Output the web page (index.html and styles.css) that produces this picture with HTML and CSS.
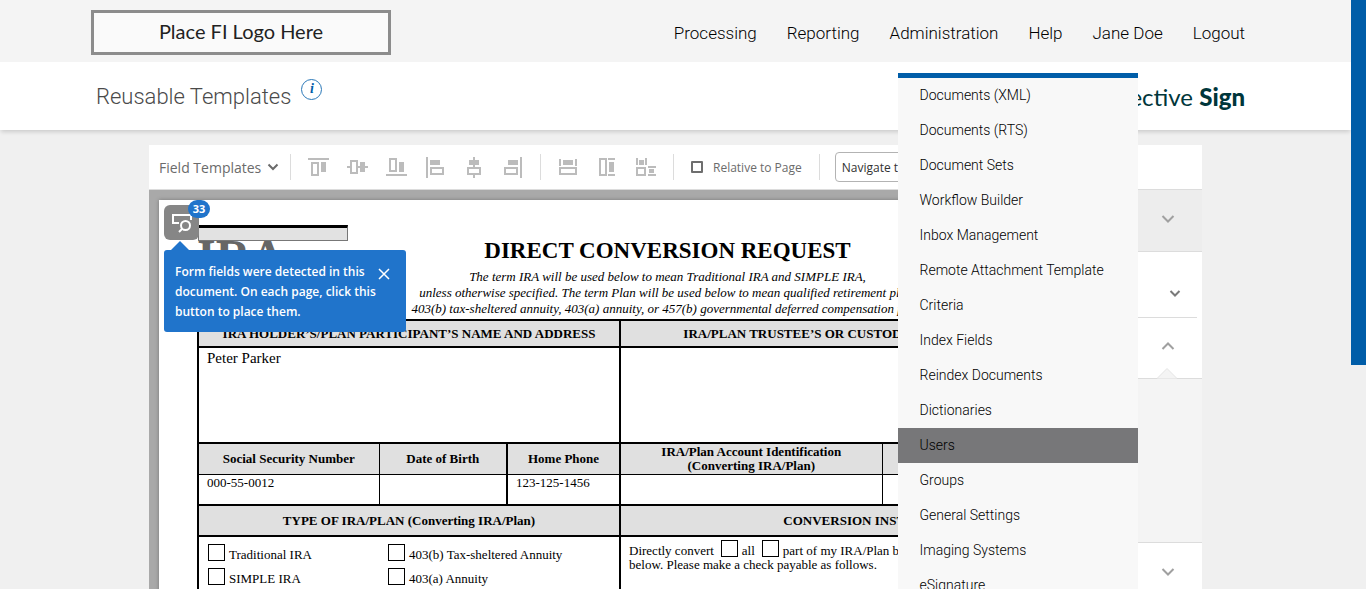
FILE: index.html
```html
<!DOCTYPE html>
<html lang="en">

<head>
    <meta charset="UTF-8">
    <meta name="viewport" content="width=device-width, initial-scale=1.0">
    <title>Reusable Templates</title>
    <link rel="stylesheet" href="styles.css">
</head>

<body>
    <div class="app">
        <header class="header">
            <div class="fi-logo">Place FI Logo Here</div>
            <nav class="nav">
                <a href="#">Processing</a>
                <a href="#">Reporting</a>
                <div class="nav-item">
                    <a href="#">Administration</a>
                    <div class="menu">
                        <a href="#">Documents (XML)</a>
                        <a href="#">Documents (RTS)</a>
                        <a href="#">Document Sets</a>
                        <a href="#">Workflow Builder</a>
                        <a href="#">Inbox Management</a>
                        <a href="#">Remote Attachment Template</a>
                        <a href="#">Criteria</a>
                        <a href="#">Index Fields</a>
                        <a href="#">Reindex Documents</a>
                        <a href="#">Dictionaries</a>
                        <a href="#" class="active">Users</a>
                        <a href="#">Groups</a>
                        <a href="#">General Settings</a>
                        <a href="#">Imaging Systems</a>
                        <a href="#">eSignature</a>
                    </div>
                </div>
                <a href="#">Help</a>
                <a href="#">Jane Doe</a>
                <a href="#">Logout</a>
            </nav>
        </header>

        <div class="title-bar">
            <h1>Reusable Templates</h1>
            <button class="info" aria-label="Information">i</button>
            <div class="brand">Effective <b>Sign</b></div>
        </div>

        <main class="editor">
            <div class="toolbar">
                <button class="templates">Field Templates
                    <svg width="12" height="8" viewBox="0 0 12 8"><path d="M1.500 1.500 6 6l4.500-4.500" /></svg>
                </button>
                <span class="separator"></span>
                <button class="tool" aria-label="Align top">
                    <svg width="21" height="22" viewBox="0 -1 21 22"><path d="M0 1h21v2H0zM13 5h5v10h-5z" /><rect x="4" y="6" width="6" height="12" /></svg>
                </button>
                <button class="tool" aria-label="Align middle">
                    <svg width="21" height="22" viewBox="0 -1 21 22"><path d="M0 9h3v2H0zM11 9h2v2h-2zM18 9h3v2h-3zM13 5h5v10h-5z" /><rect x="4" y="4" width="6" height="12" /></svg>
                </button>
                <button class="tool" aria-label="Align bottom">
                    <svg width="21" height="22" viewBox="0 -1 21 22"><path d="M0 17h21v2H0zM13 5h5v10h-5z" /><rect x="4" y="2" width="6" height="12" /></svg>
                </button>
                <button class="tool" aria-label="Align left">
                    <svg width="21" height="22" viewBox="0 -1 21 22"><path d="M1 0h2v21H1zM5 3h10v5H5z" /><rect x="6" y="11" width="12" height="6" /></svg>
                </button>
                <button class="tool" aria-label="Align center">
                    <svg width="21" height="22" viewBox="0 -1 21 22"><path d="M9 0h2v3H9zM9 8h2v2H9zM9 18h2v3H9zM5 3h10v5H5z" /><rect x="4" y="11" width="12" height="6" /></svg>
                </button>
                <button class="tool" aria-label="Align right">
                    <svg width="21" height="22" viewBox="0 -1 21 22"><path d="M17 0h2v21h-2zM5 3h10v5H5z" /><rect x="2" y="11" width="12" height="6" /></svg>
                </button>
                <span class="separator"></span>
                <button class="tool" aria-label="Match width">
                    <svg width="21" height="22" viewBox="0 -1 21 22"><path d="M1 2h2v7H1zM17 2h2v7h-2zM5 3h10v5H5z" /><rect x="2" y="11" width="16" height="6" /></svg>
                </button>
                <button class="tool" aria-label="Match height">
                    <svg width="21" height="22" viewBox="0 -1 21 22"><path d="M11 1h7v2h-7zM11 17h7v2h-7zM12 5h5v10h-5z" /><rect x="3" y="2" width="6" height="16" /></svg>
                </button>
                <button class="tool" aria-label="Match size">
                    <svg width="21" height="22" viewBox="0 -1 21 22"><path d="M0 1h2v7H0zM9 1h2v7H9zM3 3h5v5H3zM12 9h8v2h-8zM12 17h8v2h-8zM13 12h5v4h-5z" /><rect x="1" y="11" width="8" height="7" /></svg>
                </button>
                <span class="separator"></span>
                <label class="relative"><input type="checkbox"> Relative to Page</label>
                <span class="separator"></span>
                <select class="navigate" aria-label="Navigate to page">
                    <option>Navigate to page</option>
                </select>
            </div>

            <div class="workspace">
                <div class="canvas">
                    <div class="page">
                        <div class="doc-header">
                            <div class="doc-logo">
                                <div class="doc-logo-box"></div>
                                <div class="doc-logo-text">IRA</div>
                            </div>
                            <div class="doc-title">
                                <h2>DIRECT CONVERSION REQUEST</h2>
                                <p>The term IRA will be used below to mean Traditional IRA and SIMPLE IRA,<br>
                                    unless otherwise specified. The term Plan will be used below to mean qualified retirement plan,<br>
                                    403(b) tax-sheltered annuity, 403(a) annuity, or 457(b) governmental deferred compensation plan.</p>
                            </div>
                        </div>
                        <table class="form">
                            <colgroup>
                                <col class="col-ssn">
                                <col class="col-birth">
                                <col class="col-phone">
                                <col class="col-account">
                                <col class="col-type">
                            </colgroup>
                            <tr class="row-title">
                                <th colspan="3">IRA HOLDER’S/PLAN PARTICIPANT’S NAME AND ADDRESS</th>
                                <th colspan="2">IRA/PLAN TRUSTEE’S OR CUSTODIAN’S NAME AND ADDRESS</th>
                            </tr>
                            <tr class="row-address">
                                <td colspan="3">Peter Parker</td>
                                <td colspan="2"></td>
                            </tr>
                            <tr class="row-labels">
                                <th class="thin">Social Security Number</th>
                                <th>Date of Birth</th>
                                <th>Home Phone</th>
                                <th class="thin">IRA/Plan Account Identification<br>(Converting IRA/Plan)</th>
                                <th>Plan Type</th>
                            </tr>
                            <tr class="row-values">
                                <td class="thin">000-55-0012</td>
                                <td></td>
                                <td>123-125-1456</td>
                                <td class="thin"></td>
                                <td></td>
                            </tr>
                            <tr class="row-section">
                                <th colspan="3">TYPE OF IRA/PLAN (Converting IRA/Plan)</th>
                                <th colspan="2">CONVERSION INSTRUCTIONS</th>
                            </tr>
                            <tr class="row-options">
                                <td colspan="3">
                                    <div class="options">
                                        <label><input type="checkbox">Traditional IRA</label>
                                        <label><input type="checkbox">403(b) Tax-sheltered Annuity</label>
                                        <label><input type="checkbox">SIMPLE IRA</label>
                                        <label><input type="checkbox">403(a) Annuity</label>
                                    </div>
                                </td>
                                <td colspan="2">
                                    <div class="convert">
                                        <span>Directly convert</span>
                                        <label><input type="checkbox">all</label>
                                        <label><input type="checkbox">part of my IRA/Plan balance as indicated</label>
                                    </div>
                                    <div>below. Please make a check payable as follows.</div>
                                </td>
                            </tr>
                        </table>
                    </div>

                    <button class="detect" aria-label="Place detected fields">
                        <svg width="35" height="35" viewBox="0 0 35 35"><path d="M15 18H9V10h18v5" /><circle cx="21.500" cy="20.500" r="4.500" /><path d="m18 24-3 3" /></svg>
                        <span class="badge">33</span>
                    </button>
                    <div class="tooltip">
                        <p>Form fields were detected in this document. On each page, click this button to place them.</p>
                        <button aria-label="Close">
                            <svg width="12" height="12" viewBox="0 0 12 12"><path d="m1 1 10 10M11 1 1 11" /></svg>
                        </button>
                    </div>
                </div>

                <aside class="panel">
                    <button class="panel-row recipients" aria-label="Recipients">
                        <svg width="14" height="8" viewBox="0 0 14 8"><path d="m1.500 1 5.500 5.500L12.500 1" /></svg>
                    </button>
                    <button class="panel-row role" aria-label="Role">
                        <svg width="12" height="7" viewBox="0 0 12 7"><path d="m1.500 1 4.500 4.500L10.500 1" /></svg>
                    </button>
                    <button class="panel-row open" aria-label="Fields">
                        <svg width="14" height="8" viewBox="0 0 14 8"><path d="M1.500 7 7 1.500 12.500 7" /></svg>
                    </button>
                    <div class="panel-body">
                        <svg class="notch" width="20" height="11" viewBox="0 0 20 11"><path d="m0 10.500 10-10 10 10" /></svg>
                    </div>
                    <button class="panel-row" aria-label="More fields">
                        <svg width="14" height="8" viewBox="0 0 14 8"><path d="m1.500 1 5.500 5.500L12.500 1" /></svg>
                    </button>
                </aside>
            </div>
        </main>
    </div>
    <div class="side-strip"></div>
</body>

</html>
```
FILE: styles.css
```css
* {
    box-sizing: border-box;
}

body {
    margin: 0;
    height: 100vh;
    display: flex;
    overflow: hidden;
    background-color: #f0f0f0;
    font-family: Roboto, sans-serif;
    color: #000;
}

h1,
h2,
p {
    margin: 0;
}

a {
    color: inherit;
    text-decoration: none;
}

button {
    padding: 0;
    border: 0;
    background: none;
    font-family: inherit;
    color: inherit;
}

svg {
    display: block;
    fill: none;
}

.app {
    flex: 1;
    min-width: 0;
    display: flex;
    flex-direction: column;
}

.side-strip {
    width: 15px;
    height: 62vh;
    background-color: #005da8;
}

/* header */
.header {
    flex: none;
    display: flex;
    justify-content: space-between;
    align-items: center;
    height: 62px;
    padding: 3px 106px 0 91px;
    background-color: #f4f4f4;
}

.fi-logo {
    width: 300px;
    height: 45px;
    border: 3px solid #8c8c8c;
    background-color: #fafafa;
    font-family: Lato, sans-serif;
    font-size: 20px;
    line-height: 37px;
    text-align: center;
    color: #222;
}

.nav {
    display: flex;
    gap: 30px;
    font-size: 17px;
    font-weight: 300;
    line-height: 24px;
}

.nav-item {
    position: relative;
}

.menu {
    position: absolute;
    top: 52px;
    left: 8px;
    z-index: 10;
    width: 240px;
    border-top: 5px solid #005da8;
    background-color: #f8f8f8;
}

.menu a {
    display: block;
    padding-left: 22px;
    font-size: 14px;
    line-height: 35px;
}

.menu a.active {
    background-color: #777779;
}

/* page title */
.title-bar {
    flex: none;
    display: flex;
    align-items: center;
    height: 68px;
    padding: 0 106px 0 96px;
    background-color: #fff;
    box-shadow: 0 3px 4px -1px rgba(0, 0, 0, 0.15);
}

.title-bar h1 {
    font-size: 22px;
    font-weight: 300;
    color: #4a4a4a;
}

.info {
    width: 21px;
    height: 21px;
    margin: 0 0 14px 10px;
    border: 1px solid #2a78b8;
    border-radius: 50%;
    font: italic bold 14px/18px "Liberation Serif", serif;
    color: #005da8;
}

.brand {
    margin-left: auto;
    font-family: Lato, sans-serif;
    font-size: 24px;
    color: #00363b;
}

.brand b {
    font-weight: 900;
}

/* editor */
.editor {
    flex: 1;
    min-height: 0;
    display: flex;
    flex-direction: column;
    margin: 15px 149px 0;
    background-color: #fff;
    font-family: "Open Sans", sans-serif;
}

.toolbar {
    flex: none;
    display: flex;
    align-items: center;
    height: 45px;
    padding-left: 10px;
    border-bottom: 1px solid #dcdcdc;
    color: #6b6b6b;
}

.templates {
    display: flex;
    align-items: center;
    gap: 6px;
    width: 124px;
    font-size: 14px;
    white-space: nowrap;
}

.templates svg {
    stroke: #6b6b6b;
    stroke-width: 2;
}

.separator {
    width: 1px;
    height: 26px;
    margin: 0 8px 0 7px;
    background-color: #dcdcdc;
}

.tool {
    display: flex;
    justify-content: center;
    width: 39px;
}

.tool path {
    fill: #bcbcbc;
}

.tool rect {
    stroke: #bcbcbc;
    stroke-width: 2;
}

.relative {
    display: flex;
    align-items: center;
    gap: 10px;
    padding: 0 10px 0 9px;
    font-size: 12px;
    white-space: nowrap;
}

.relative input {
    appearance: none;
    width: 12px;
    height: 12px;
    margin: 0;
    border: 2px solid #6e6e6e;
    border-radius: 1px;
}

.navigate {
    appearance: none;
    width: 150px;
    height: 30px;
    margin-left: 7px;
    padding: 0 6px;
    border: 1px solid #b3b3b3;
    border-radius: 4px;
    background-color: #fff;
    font: 12px "Open Sans", sans-serif;
    color: #323232;
}

.workspace {
    flex: 1;
    min-height: 0;
    display: flex;
}

.canvas {
    position: relative;
    flex: 1;
    min-width: 0;
    overflow: hidden;
    padding: 10px 0 0 10px;
    background-color: #a9a9a9;
}

/* document */
.page {
    width: 1017px;
    padding: 25px 38px;
    background-color: #fff;
    box-shadow: 0 0 4px rgba(0, 0, 0, 0.3);
    font: 13px/14px "Liberation Serif", serif;
    color: #000;
}

.doc-header {
    display: grid;
    grid-template-columns: 151px 1fr 151px;
    height: 94px;
}

.doc-logo-box {
    height: 16px;
    margin-left: 1px;
    border: 1px solid #777;
    border-top: 3px solid #000;
    background-color: #e2e2e2;
}

.doc-logo-text {
    font-size: 48px;
    font-weight: bold;
    line-height: 32px;
    color: #666;
}

.doc-title {
    padding-top: 10px;
    text-align: center;
    white-space: nowrap;
}

.doc-title h2 {
    font-size: 23px;
    line-height: 32px;
}

.doc-title p {
    padding-top: 2px;
    font-size: 13px;
    font-style: italic;
    line-height: 16px;
}

.form {
    width: 100%;
    table-layout: fixed;
    border-collapse: collapse;
}

.form th,
.form td {
    padding: 1px 8px 0;
    border: 2px solid #000;
}

.form th {
    background-color: #e0e0e0;
}

.form td {
    vertical-align: top;
}

.form .thin {
    border-right-width: 1px;
}

.row-labels th {
    border-bottom-width: 1px;
}

.row-values td {
    border-top-width: 1px;
}

.form .thin + th,
.form .thin + td {
    border-left-width: 1px;
}

.col-ssn {
    width: 181px;
}

.col-birth {
    width: 128px;
}

.col-phone {
    width: 113px;
}

.col-account {
    width: 262px;
}

.row-title {
    height: 27px;
}

.row-address {
    height: 96px;
    font-size: 15px;
    line-height: 18px;
}

.row-labels,
.row-values,
.row-section {
    height: 31px;
}

.row-options {
    height: 160px;
}

.form input {
    appearance: none;
    flex: none;
    width: 17px;
    height: 17px;
    margin: 0;
    border: 1px solid #000;
}

.form label {
    display: flex;
    gap: 4px;
    line-height: 22px;
}

.options {
    display: grid;
    grid-template-columns: 180px 1fr;
    row-gap: 2px;
    padding: 6px 0 0 1px;
}

.convert {
    display: flex;
    gap: 7px;
    height: 20px;
    padding-top: 2px;
    line-height: 22px;
    white-space: nowrap;
}

/* detected fields */
.detect {
    position: absolute;
    top: 15px;
    left: 15px;
    border-radius: 6px;
    background-color: #868686;
}

.detect svg {
    stroke: #fff;
    stroke-width: 2;
}

.badge {
    position: absolute;
    top: -5px;
    right: -11px;
    width: 22px;
    border-radius: 9px;
    background-color: #2074cb;
    font-size: 11px;
    font-weight: bold;
    line-height: 18px;
    color: #fff;
}

.tooltip {
    position: absolute;
    top: 60px;
    left: 15px;
    display: flex;
    align-items: flex-start;
    justify-content: space-between;
    width: 242px;
    padding: 12px 16px 10px 11px;
    border-radius: 3px;
    background-color: #2074cb;
    font-size: 12px;
    font-weight: 600;
    line-height: 20px;
    color: #fff;
}

.tooltip::before {
    content: "";
    position: absolute;
    top: -9px;
    left: 7px;
    border: 9px solid transparent;
    border-top: 0;
    border-bottom-color: #2074cb;
}

.tooltip p {
    width: 203px;
}

.tooltip button {
    padding-top: 6px;
}

.tooltip svg {
    stroke: #fff;
    stroke-width: 1.5;
}

/* right panel */
.panel {
    flex: none;
    width: 264px;
    display: flex;
    flex-direction: column;
    background-color: #fff;
}

.panel-row {
    flex: none;
    display: flex;
    align-items: center;
    justify-content: flex-end;
    height: 62px;
    padding: 0 27px 4px 0;
    border-bottom: 1px solid #dcdcdc;
}

.panel-row svg {
    stroke: #a0a0a0;
    stroke-width: 2;
}

.recipients {
    background-color: #ededed;
}

.role {
    height: 66px;
    margin-right: 5px;
    padding: 18px 16px 0 0;
}

.role svg {
    stroke: #7a7a7a;
}

.open {
    height: 61px;
}

.panel-body {
    position: relative;
    flex: none;
    height: 164px;
    border-bottom: 1px solid #dcdcdc;
    background-color: #f4f4f4;
}

.notch {
    position: absolute;
    top: -11px;
    right: 25px;
    fill: #f4f4f4;
    stroke: #e4e4e4;
}
```
